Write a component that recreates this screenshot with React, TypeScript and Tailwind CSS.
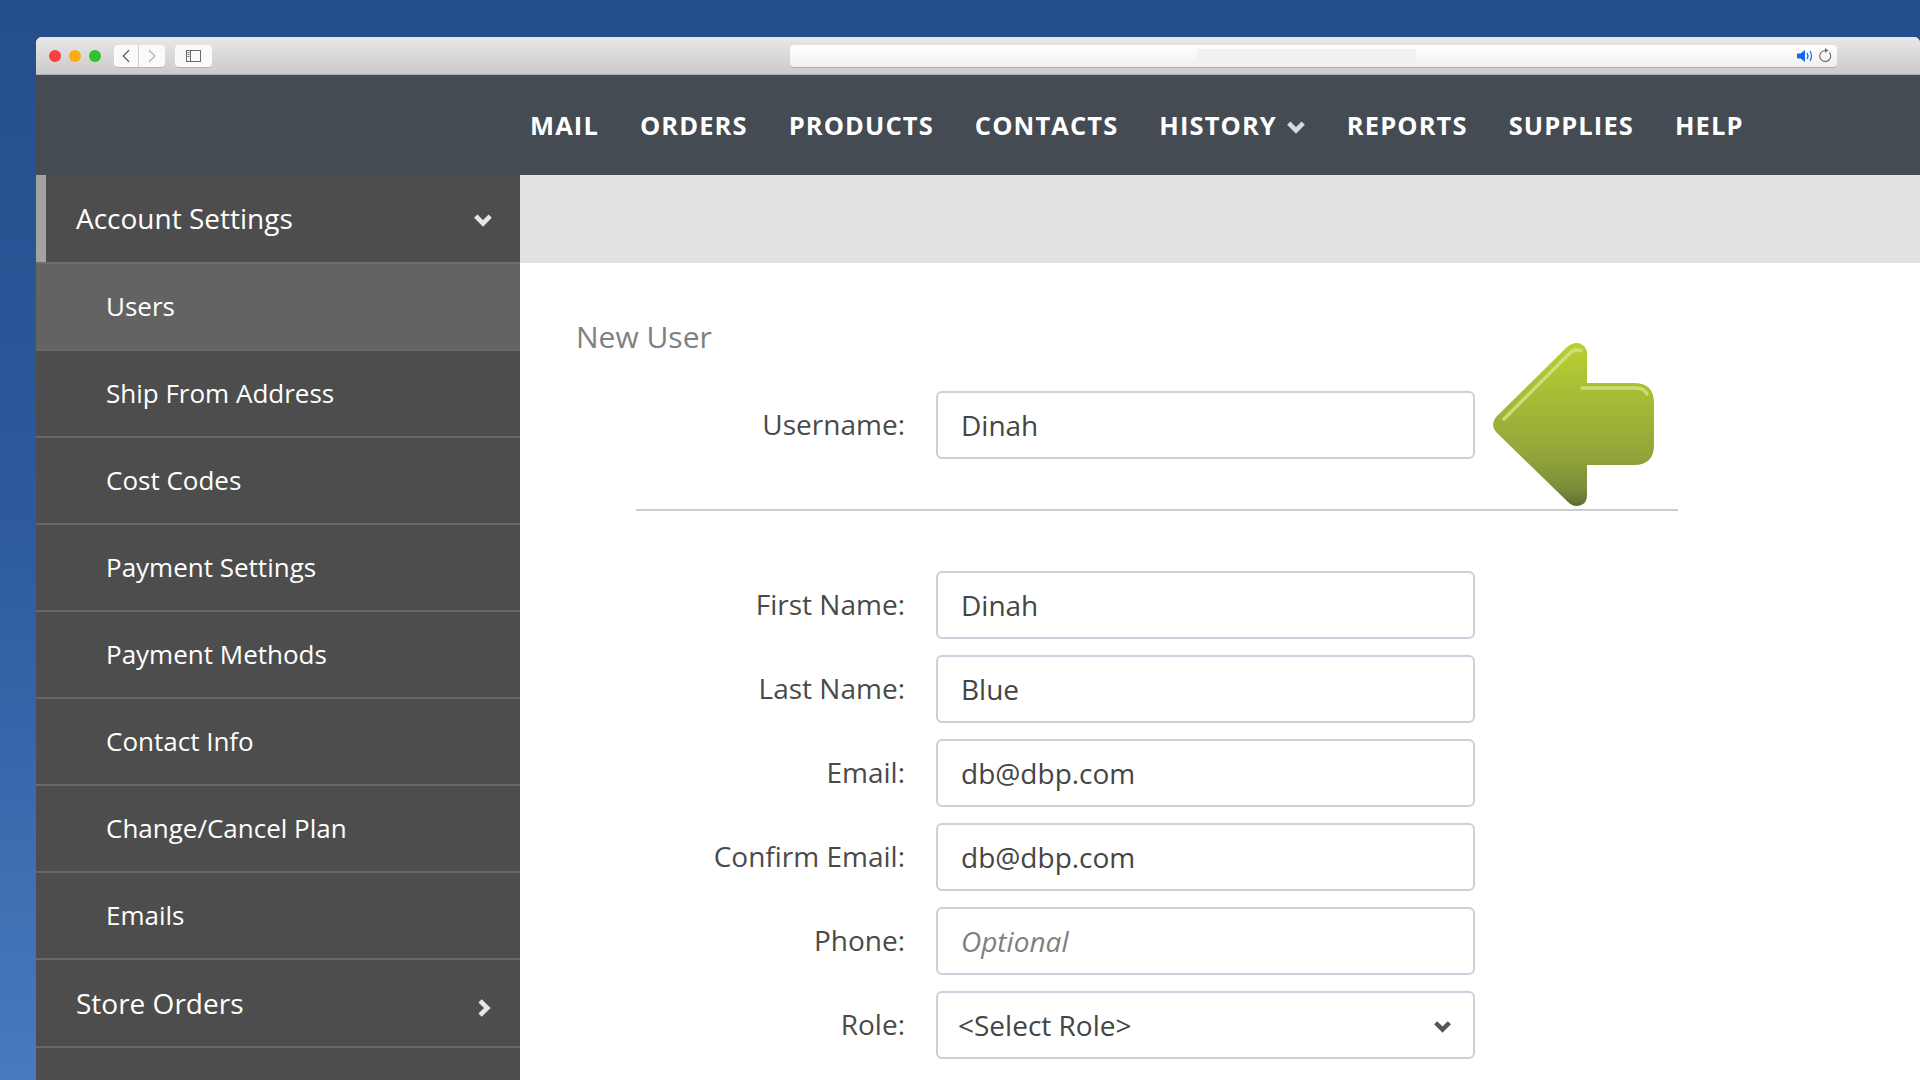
import { ChevronLeft, ChevronRight } from "lucide-react";

const navItems = ["MAIL", "ORDERS", "PRODUCTS", "CONTACTS", "HISTORY", "REPORTS", "SUPPLIES", "HELP"];
const subItems = [
  "Ship From Address",
  "Cost Codes",
  "Payment Settings",
  "Payment Methods",
  "Contact Info",
  "Change/Cancel Plan",
  "Emails",
];
const fields = [
  { label: "First Name:", value: "Dinah" },
  { label: "Last Name:", value: "Blue" },
  { label: "Email:", value: "db@dbp.com" },
  { label: "Confirm Email:", value: "db@dbp.com" },
];

function ThickChevron({ dir, className }: { dir: "down" | "right"; className: string }) {
  return (
    <svg viewBox="0 0 18 18" className={className} fill="none" stroke="currentColor" strokeWidth="4.2" strokeLinecap="butt" strokeLinejoin="miter">
      {dir === "down" ? <path d="M2.5 5.5 L9 12 L15.5 5.5" /> : <path d="M5.5 2.5 L12 9 L5.5 15.5" />}
    </svg>
  );
}

function GreenArrow() {
  return (
    <svg viewBox="0 0 166 170" className="absolute left-[913px] top-[-50px] h-[170px] w-[166px]">
      <defs>
        <linearGradient id="arrowFill" x1="0" y1="0" x2="0" y2="1">
          <stop offset="0" stopColor="#b9d030" />
          <stop offset="0.35" stopColor="#a6ba36" />
          <stop offset="0.7" stopColor="#91a43b" />
          <stop offset="0.9" stopColor="#7a8c39" />
          <stop offset="1" stopColor="#5d6e2e" />
        </linearGradient>
      </defs>
      <path
        d="M6 76 L76 7 Q84 0 91 3 Q97 6 97 13 L97 42 L144 42 Q164 42 164 62 L164 104 Q164 124 144 124 L97 124 L97 154 Q97 162 91 164 Q84 167 78 161 L6 91 Q0 84 6 76 Z"
        fill="url(#arrowFill)"
      />
      <path d="M14 78 L80 12 Q85 7 91 10" fill="none" stroke="#d3e27c" strokeWidth="3.5" strokeLinecap="round" opacity="0.85" />
      <path d="M92 47 L146 47 Q154 47 157 53" fill="none" stroke="#cfdf85" strokeWidth="3.5" strokeLinecap="round" opacity="0.9" />
    </svg>
  );
}

function Row({ label, children }: { label: string; children: React.ReactNode }) {
  return (
    <div className="relative flex items-center">
      <div className="mb-[2px] w-[328px] text-right text-[28px] text-[#4a4a4a]">{label}</div>
      <div className="ml-[31px] flex h-[68px] w-[539px] items-center rounded-[6px] border-2 border-[#ccd0dc] bg-white text-[28px] text-[#454545]">
        {children}
      </div>
    </div>
  );
}

export default function App() {
  return (
    <div className="h-[1080px] w-[1920px] overflow-hidden bg-gradient-to-b from-[#254e8c] via-[#2d5b9e] to-[#477bbd] pl-[36px] pt-[37px] font-['Open_Sans',sans-serif]">
      <div className="flex h-[1043px] flex-col overflow-hidden rounded-t-[6px] bg-white">
        {/* browser chrome */}
        <div className="flex h-[38px] shrink-0 items-center border-b border-[#aeaeae] bg-gradient-to-b from-[#e8e8e8] to-[#cbcbcb] pl-[13px]">
          <div className="flex gap-2">
            <span className="h-3 w-3 rounded-full bg-[#fc3d41]" />
            <span className="h-3 w-3 rounded-full bg-[#fdab14]" />
            <span className="h-3 w-3 rounded-full bg-[#33c22c]" />
          </div>
          <div className="ml-[13px] mt-[1px] flex h-[23px] w-[51px] rounded-[4px] border-b border-[#b4b4b4] bg-[#fafafa]">
            <div className="flex w-[25px] items-center justify-center border-r border-[#cfcfcf]">
              <ChevronLeft className="h-[22px] w-[22px] text-[#666666]" strokeWidth={1.5} />
            </div>
            <div className="flex flex-1 items-center justify-center">
              <ChevronRight className="h-[22px] w-[22px] text-[#b5b5b5]" strokeWidth={1.5} />
            </div>
          </div>
          <div className="ml-[10px] mt-[1px] flex h-[23px] w-[37px] items-center justify-center rounded-[4px] border-b border-[#b4b4b4] bg-[#fafafa]">
            <svg viewBox="0 0 15 12" className="h-[12px] w-[15px]" fill="none" stroke="#6a6a6a">
              <rect x="0.5" y="0.5" width="14" height="11" />
              <path d="M4.5 0.5 V11.5" />
              <path d="M1.5 2.5 H3.5 M1.5 4.5 H3.5 M1.5 6.5 H3.5" />
            </svg>
          </div>
          <div className="ml-[578px] mt-[1px] flex h-[23px] w-[1047px] items-center rounded-[4px] border-b border-[#aeaeae] bg-gradient-to-b from-[#ffffff] to-[#f0f0f0] pr-[5px]">
            <div className="ml-[407px] h-[13px] w-[219px] bg-[#f1f1f1]" />
            <svg viewBox="0 0 17 14" className="ml-auto h-[14px] w-[17px]" fill="none">
              <path d="M0 4.5 H3.5 L8 1 V13 L3.5 9.5 H0 Z" fill="#1566f0" />
              <path d="M10 4 Q12 7 10 10 M13 2 Q16 7 13 12" stroke="#1566f0" strokeWidth="1.2" />
            </svg>
            <svg viewBox="0 0 14 15" className="ml-[4px] h-[15px] w-[14px]" fill="none">
              <path d="M11.5 4.5 A5.5 5.5 0 1 1 7 2.5" stroke="#6f6f6f" strokeWidth="1.2" />
              <path d="M7 0 L10.5 2.5 L7 5 Z" fill="#6f6f6f" />
            </svg>
          </div>
        </div>

        {/* top nav */}
        <div className="flex h-[100px] shrink-0 items-center gap-[41px] bg-[#454b52] pl-[494px] text-[25.5px] font-bold tracking-[1.1px] text-white">
          {navItems.map((item) => (
            <div key={item} className="flex items-center">
              {item}
              {item === "HISTORY" && <ThickChevron dir="down" className="ml-[9px] mt-[3px] h-[20px] w-[20px] text-[#d9d9d9]" />}
            </div>
          ))}
        </div>

        <div className="flex flex-1">
          {/* sidebar */}
          <div className="w-[484px] shrink-0 bg-[#4d4d4d] text-white">
            <div className="flex h-[87px] items-center justify-between border-l-[10px] border-[#a3a3a3] pb-[2px] pl-[30px] pr-[27px] text-[28px]">
              Account Settings
              <ThickChevron dir="down" className="mt-[5px] h-[20px] w-[20px] text-[#e6e6e6]" />
            </div>
            <div className="flex h-[87px] items-center border-t-2 border-[#6e6e6e] bg-[#636363] pl-[70px] text-[26px]">Users</div>
            {subItems.map((item) => (
              <div key={item} className="flex h-[87px] items-center border-t-2 border-[#676767] pl-[70px] text-[26px]">
                {item}
              </div>
            ))}
            <div className="flex h-[90px] items-center justify-between border-y-2 border-[#676767] pl-[40px] pr-[26px] text-[28px]">
              Store Orders
              <ThickChevron dir="right" className="mt-[9px] h-[20px] w-[20px] text-[#e6e6e6]" />
            </div>
          </div>

          {/* content */}
          <div className="flex-1">
            <div className="h-[88px] bg-[#e2e2e2]" />
            <div className="pl-[57px]">
              <div className="ml-[-1px] mt-[54px] flex h-[40px] items-center text-[30px] leading-none text-[#808080]">New User</div>
              <div className="relative mt-[34px]">
                <Row label="Username:">
                  <span className="pl-[23px]">Dinah</span>
                </Row>
                <GreenArrow />
              </div>
              <div className="ml-[59px] mt-[50px] h-[2px] w-[1042px] bg-[#cccccc]" />
              <div className="mt-[60px] flex flex-col gap-[16px]">
                {fields.map((f) => (
                  <Row key={f.label} label={f.label}>
                    <span className="pl-[23px]">{f.value}</span>
                  </Row>
                ))}
                <Row label="Phone:">
                  <span className="pl-[23px] italic text-[#808080]">Optional</span>
                </Row>
                <Row label="Role:">
                  <span className="pl-[20px]">{"<Select Role>"}</span>
                  <ThickChevron dir="down" className="ml-auto mr-[21px] mt-[3px] h-[19px] w-[19px] text-[#555555]" />
                </Row>
              </div>
            </div>
          </div>
        </div>
      </div>
    </div>
  );
}
